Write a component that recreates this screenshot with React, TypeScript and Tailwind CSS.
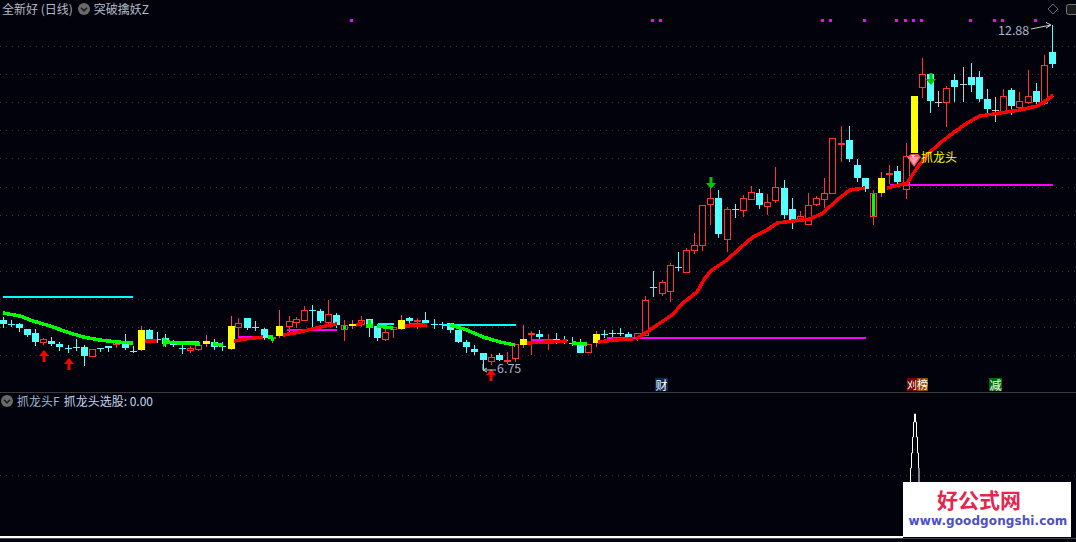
import React from "react";

type Kind = "c" | "r" | "y" | "w" | "g" | "q";
type Candle = [number, number, number, number, number, Kind];

const candles: Candle[] = [
  [3, 320, 324, 317, 328, "c"], [11, 324, 325, 320, 327, "c"], [19, 324, 328, 323, 332, "c"], [27, 329, 335, 329, 337, "c"],
  [35, 333, 342, 329, 346, "c"], [43, 339, 342, 338, 345, "r"], [51, 341, 344, 337, 346, "c"], [59, 344, 347, 342, 351, "c"],
  [68, 348, 349, 345, 353, "c"], [76, 347, 348, 339, 351, "c"], [84, 347, 356, 345, 366, "c"], [92, 349, 356, 349, 356, "r"],
  [100, 348, 349, 348, 352, "c"], [108, 346, 348, 346, 352, "c"], [116, 342, 344, 342, 348, "r"], [125, 343, 348, 334, 350, "c"],
  [133, 351, 352, 346, 353, "c"], [141, 330, 350, 326, 351, "y"], [149, 330, 339, 329, 341, "c"], [157, 339, 340, 332, 343, "c"],
  [165, 338, 344, 334, 347, "c"], [173, 342, 345, 340, 347, "c"], [182, 348, 349, 342, 354, "c"], [190, 348, 350, 346, 353, "r"],
  [198, 345, 349, 343, 351, "r"], [206, 341, 344, 335, 347, "y"], [214, 342, 347, 339, 350, "c"], [222, 346, 347, 342, 351, "c"],
  [231, 326, 349, 316, 350, "y"], [238, 323, 327, 318, 338, "r"], [247, 318, 328, 318, 330, "c"], [255, 327, 328, 321, 331, "c"],
  [264, 329, 338, 328, 340, "c"], [272, 337, 338, 335, 343, "g"], [279, 326, 336, 310, 338, "y"], [289, 321, 326, 316, 334, "r"],
  [296, 319, 322, 317, 328, "r"], [304, 310, 320, 306, 321, "r"], [312, 310, 311, 305, 327, "c"], [320, 311, 321, 309, 323, "c"],
  [328, 314, 322, 300, 325, "r"], [336, 315, 325, 313, 328, "c"], [344, 325, 329, 320, 341, "g"], [352, 324, 326, 320, 329, "y"],
  [361, 320, 324, 316, 327, "r"], [369, 319, 326, 319, 337, "q"], [377, 326, 338, 325, 341, "c"], [385, 332, 339, 328, 341, "r"],
  [393, 327, 329, 327, 338, "r"], [401, 320, 329, 315, 330, "y"], [409, 318, 321, 317, 324, "c"], [417, 320, 321, 318, 329, "r"],
  [425, 320, 323, 312, 327, "c"], [434, 324, 325, 319, 329, "c"], [442, 324, 325, 322, 329, "c"], [450, 323, 330, 323, 333, "c"],
  [458, 330, 342, 330, 343, "c"], [466, 342, 347, 340, 353, "c"], [474, 349, 352, 345, 355, "c"], [483, 353, 360, 353, 370, "c"],
  [491, 357, 361, 354, 365, "r"], [499, 355, 360, 353, 361, "c"], [507, 360, 361, 352, 364, "r"], [515, 344, 358, 344, 362, "r"],
  [523, 339, 345, 325, 348, "y"], [531, 333, 334, 331, 355, "r"], [539, 334, 337, 330, 339, "c"], [548, 341, 342, 334, 350, "r"],
  [556, 339, 340, 333, 344, "c"], [564, 340, 341, 336, 344, "c"], [572, 343, 344, 337, 346, "c"], [580, 345, 353, 339, 353, "c"],
  [588, 344, 352, 344, 352, "r"], [596, 334, 343, 331, 347, "y"], [604, 334, 335, 330, 338, "c"], [612, 333, 334, 330, 337, "c"],
  [620, 333, 334, 328, 336, "c"], [628, 334, 337, 332, 337, "c"], [637, 333, 338, 333, 341, "r"], [645, 300, 335, 296, 336, "r"],
  [653, 287, 288, 271, 297, "c"], [662, 282, 293, 280, 296, "r"], [670, 265, 291, 263, 302, "r"], [678, 267, 268, 252, 271, "c"],
  [686, 250, 272, 248, 272, "r"], [694, 245, 250, 233, 254, "r"], [702, 205, 245, 205, 251, "r"], [710, 198, 204, 188, 225, "r"],
  [718, 198, 234, 190, 238, "c"], [727, 209, 239, 207, 252, "r"], [735, 209, 210, 204, 218, "c"], [743, 198, 210, 195, 217, "r"],
  [751, 192, 199, 186, 199, "r"], [759, 193, 205, 189, 209, "c"], [767, 202, 206, 194, 215, "r"], [775, 187, 200, 167, 203, "r"],
  [784, 188, 215, 180, 219, "c"], [792, 209, 220, 198, 229, "c"], [800, 216, 220, 211, 222, "r"], [808, 205, 224, 193, 224, "r"],
  [816, 198, 204, 196, 206, "r"], [824, 193, 199, 178, 208, "r"], [832, 138, 193, 138, 193, "r"], [841, 143, 144, 126, 162, "r"],
  [849, 140, 159, 126, 162, "c"], [857, 165, 178, 159, 182, "c"], [865, 178, 189, 178, 192, "c"], [873, 193, 216, 190, 225, "g"],
  [881, 178, 193, 172, 197, "y"], [889, 173, 174, 165, 184, "r"], [897, 171, 182, 166, 184, "c"], [906, 156, 189, 143, 199, "r"],
  [914, 96, 153, 96, 153, "y"], [922, 74, 87, 58, 98, "r"], [930, 74, 101, 74, 113, "c"], [938, 102, 103, 91, 107, "w"],
  [946, 88, 102, 86, 127, "r"], [954, 80, 87, 74, 102, "c"], [963, 84, 85, 67, 102, "w"], [971, 77, 85, 63, 92, "c"],
  [979, 77, 99, 71, 102, "c"], [987, 99, 109, 89, 115, "c"], [995, 110, 111, 97, 122, "w"], [1003, 96, 111, 89, 113, "r"],
  [1011, 90, 106, 88, 115, "c"], [1019, 101, 107, 92, 107, "r"], [1028, 96, 102, 70, 104, "r"], [1036, 91, 102, 83, 106, "c"],
  [1044, 65, 103, 55, 105, "r"], [1052, 52, 64, 25, 68, "c"],
];

const color: Record<Kind, string> = { c: "#54ffff", r: "#ff3333", y: "#ffff00", w: "#c8c8c8", g: "#ff3333", q: "#54ffff" };

function CandleMark({ d }: { d: Candle }) {
  const [x, t, b, h, l, k] = d;
  const wick = k === "y" ? "#ff3c8c" : color[k];
  const hollow = k === "r" || k === "g";
  return (
    <g shapeRendering="crispEdges">
      <rect x={x} y={h} width={1} height={Math.max(l - h, 0)} fill={wick} />
      {hollow ? (
        b - t <= 1 ? (
          <rect x={x - 3} y={t} width={7} height={2} fill={color[k]} />
        ) : (
          <rect x={x - 2.5} y={t + 0.5} width={6} height={b - t} fill="#02020c" stroke={color[k]} />
        )
      ) : (
        <rect x={x - 3} y={t} width={7} height={Math.max(b - t, 1)} fill={color[k]} />
      )}
      {k === "g" && <rect x={x - 1} y={t + 1} width={3} height={Math.max(b - t - 1, 3)} fill="#00ff00" />}
      {k === "q" && <rect x={x - 1} y={t + 1} width={3} height={b - t - 1} fill="#00e000" />}
    </g>
  );
}

const pts = (a: number[][]) => a.map((p) => p.join(",")).join(" ");

const Ma = ({ p, c }: { p: number[][]; c: string }) => (
  <polyline points={pts(p)} fill="none" stroke={c} strokeWidth={3.5} strokeLinejoin="round" shapeRendering="crispEdges" />
);

const green: number[][][] = [
  [[3, 313], [20, 316], [33, 321], [50, 326], [67, 332], [83, 337], [100, 340], [117, 342], [133, 343]],
  [[166, 342], [180, 343], [200, 344]],
  [[213, 344], [223, 345]],
  [[268, 337], [273, 337]],
  [[366, 326], [373, 326]],
  [[377, 326], [393, 328]],
  [[450, 325], [467, 330], [483, 337], [500, 342], [515, 345]],
  [[572, 343], [587, 344]],
];

const red: number[][][] = [
  [[145, 341], [157, 341]],
  [[234, 341], [245, 339], [263, 337]],
  [[283, 335], [300, 332], [320, 327], [337, 324]],
  [[356, 325], [363, 323]],
  [[405, 326], [427, 325]],
  [[527, 343], [550, 342], [567, 341]],
  [[598, 342], [615, 340], [633, 339]],
  [[636, 339], [650, 330], [660, 323], [672, 315], [683, 303], [697, 292], [705, 278], [712, 270], [727, 260], [740, 248], [753, 237], [767, 230], [777, 223], [793, 221], [810, 219], [823, 213], [837, 200], [850, 190], [865, 188]],
  [[887, 188], [907, 183], [917, 168], [927, 155], [940, 143], [953, 133], [967, 123], [980, 116], [1000, 113], [1020, 110], [1037, 106], [1047, 100], [1053, 95]],
];

const lines: [number, number, number, string][] = [
  [3, 133, 296, "#00ffff"], [174, 199, 341, "#00ffff"], [378, 394, 323, "#00ffff"], [442, 516, 324, "#00ffff"],
  [238, 252, 336, "#ff00ff"], [287, 337, 329, "#ff00ff"], [409, 427, 323, "#ff00ff"], [532, 553, 339, "#ff00ff"],
  [607, 866, 337, "#ff00ff"], [890, 1053, 184, "#ff00ff"],
];

const dots = [351, 652, 660, 822, 830, 864, 896, 905, 913, 921, 970, 994, 1002, 1035];
const grid = [46, 74, 102, 130, 158, 187, 215, 243, 271, 299, 327, 355];

const UpArrow = ({ x, y }: { x: number; y: number }) => (
  <path d={`M${x} ${y}L${x + 5} ${y + 6}H${x + 1.5}V${y + 12}H${x - 1.5}V${y + 6}H${x - 5}Z`} fill="#ff0000" />
);
const DownArrow = ({ x, y }: { x: number; y: number }) => (
  <path d={`M${x} ${y + 12}L${x + 5} ${y + 6}H${x + 1.5}V${y}H${x - 1.5}V${y + 6}H${x - 5}Z`} fill="#00c800" />
);

const Chevron = () => (
  <svg width="12" height="12" viewBox="0 0 12 12" className="shrink-0">
    <circle cx="6" cy="6" r="6" fill="#6a6a6a" />
    <path d="M3 4.8L6 7.8L9 4.8" fill="none" stroke="#1c1c1c" strokeWidth="1.6" />
  </svg>
);

const cjk = "font-['Noto_Sans_CJK_SC','Liberation_Sans',sans-serif]";

export default function App() {
  return (
    <div className={`w-[1076px] h-[542px] overflow-hidden bg-[#02020c] flex flex-col text-xs leading-none ${cjk}`}>
      <div className="relative h-[392px] shrink-0">
        <svg className="absolute inset-0" width="1076" height="392" viewBox="0 0 1076 392">
          {grid.map((y) => (
            <line key={y} x1="0" x2="1076" y1={y + 0.5} y2={y + 0.5} stroke="#3a3a3a" strokeDasharray="1 5" shapeRendering="crispEdges" />
          ))}
          {dots.map((x) => (
            <rect key={x} x={x - 1} y="19" width="3" height="3" fill="#ff00ff" />
          ))}
          {candles.map((d) => (
            <CandleMark key={d[0]} d={d} />
          ))}
          {lines.map(([a, b, y, c]) => (
            <rect key={a + "-" + y} x={a} y={y} width={b - a} height="2" fill={c} />
          ))}
          {green.map((p, i) => (
            <Ma key={i} p={p} c="#00ff00" />
          ))}
          {red.map((p, i) => (
            <Ma key={i} p={p} c="#ff0000" />
          ))}
          <path d="M163 337L170 342L163 347Z" fill="#00ff00" />
          <UpArrow x={44} y={350} />
          <UpArrow x={69} y={358} />
          <UpArrow x={491} y={369} />
          <DownArrow x={711} y={177} />
          <DownArrow x={931} y={73} />
          <path d="M483 364V370H496M483 370L487 368M483 370L487 372" fill="none" stroke="#c8c8c8" />
          <path d="M1031 29L1051 25M1046 22.5L1051 25L1046 28" fill="none" stroke="#d0d0d0" />
          <path d="M1053 4L1058 9L1053 14L1048 9Z" fill="none" stroke="#6a6a6a" />
          <rect x="1066.5" y="4.5" width="14" height="10" rx="2" fill="#1a1a1a" stroke="#777" />
          <path d="M907 157L911 154H918L921 157L914 167Z" fill="#f05a6a" />
          <path d="M909 157H919L914 165Z" fill="#ff9aa6" />
          <path d="M911 155H915L913 158Z" fill="#ffd0d0" />
        </svg>
        <div className="relative flex items-center h-[18px] pl-[2px]">
          <span className="text-[#b4bcc8] mr-[5px]">全新好 (日线)</span>
          <Chevron />
          <span className="text-[#b4bcc8] ml-[4px]">突破擒妖Z</span>
        </div>
        <span className="absolute left-[998px] top-[22px] text-[12.5px] leading-[15px] text-[#a9b4c8]">12.88</span>
        <span className="absolute left-[497px] top-[360px] text-[12.5px] leading-[15px] text-[#a9b4c8]">6.75</span>
        <span className="absolute left-[921px] top-[150px] leading-[13px] text-[#ffff00]">抓龙头</span>
        <span className="absolute left-[655px] top-[378px] w-[13px] h-[13px] bg-[#0a2a55] text-white leading-[13px] text-center">财</span>
        <span className="absolute left-[907px] top-[378px] h-[13px] flex text-white leading-[13px]">
          <span className="w-[10px] bg-[#7a0000] text-[10px]">刈</span>
          <span className="w-[11px] bg-[#8a4a00] text-[11px]">榜</span>
        </span>
        <span className="absolute left-[989px] top-[378px] w-[13px] h-[13px] bg-[#006a00] text-white leading-[13px] text-center">减</span>
      </div>

      <div className="relative flex-1">
        <div className="h-px bg-[#3a3a3a]" />
        <svg className="absolute inset-0" width="1076" height="144" viewBox="0 0 1076 144">
          <line x1="0" x2="1076" y1="83.5" y2="83.5" stroke="#3a3a3a" strokeDasharray="1 5" shapeRendering="crispEdges" />
          <path d="M910.5 92V76H911.5V61H912.5V45H913.5V30H914.5V22H915.5V30H916.5V45H917.5V61H918.5V76H919V92" fill="none" stroke="#ffffff" />
        </svg>
        <div className="relative flex items-center h-[15px] pl-px">
          <Chevron />
          <span className="text-[#9fb4d0] ml-[4px]">抓龙头F</span>
          <span className="text-[#c4d4ec] ml-[4px]">抓龙头选股: 0.00</span>
        </div>
        <div className="absolute left-[903px] top-[90px] w-[168px] h-[55px] bg-white flex flex-col items-center">
          <span className="text-[21px] leading-[26px] mt-[4px] mr-[16px] font-bold text-[#e6264f]">好公式网</span>
          <span className="text-[12px] leading-[14px] mt-[2px] ml-[2px] font-bold tracking-[0.1px] text-[#4a50c8] font-['DejaVu_Sans',sans-serif]">www.goodgongshi.com</span>
        </div>
        <div className="absolute left-0 top-[144px] w-[903px] h-[2px] bg-white" />
        <div className="absolute left-0 right-0 bottom-[3px] h-px bg-[#444444]" />
      </div>
    </div>
  );
}
